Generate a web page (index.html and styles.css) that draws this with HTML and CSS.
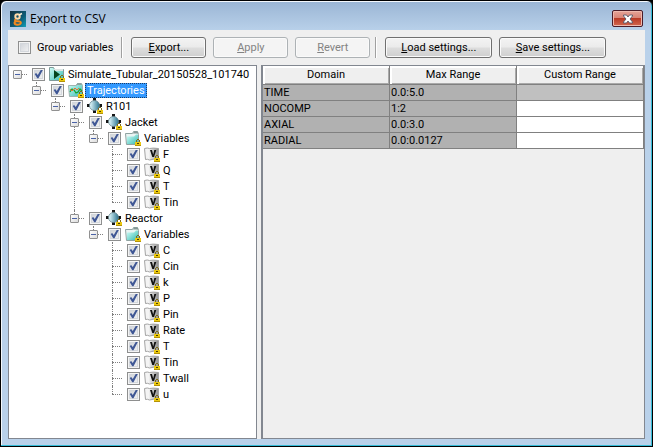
FILE: index.html
```html
<!DOCTYPE html>
<html lang="en">
<head>
<meta charset="utf-8">
<title>Export to CSV</title>
<link rel="stylesheet" href="styles.css">
</head>
<body>
<svg class="defs" aria-hidden="true">
  <defs>
    <linearGradient id="teal" x1="0" y1="0" x2="1" y2="1"><stop offset="0" stop-color="#d4fff9"/><stop offset="1" stop-color="#35b9b0"/></linearGradient>
    <linearGradient id="ball" x1="0" x2="1"><stop offset="0.1" stop-color="#d8f2f7"/><stop offset="1" stop-color="#2c7590"/></linearGradient>
    <linearGradient id="page" x1="0" x2="1"><stop offset="0.3" stop-color="#f4f4f4"/><stop offset="1" stop-color="#8e8e8e"/></linearGradient>
    <symbol id="lock" viewBox="0 0 6 7"><g shape-rendering="crispEdges"><path d="M1 1h1V0h2v1h1v2H4V1H2v2H1z" fill="#7d6c1c"/><path d="M0 3h6v4H0z" fill="#ecc90f"/><path d="M0 6h6v1H0z" fill="#b39208"/><path d="M2 4h2v1H2z" fill="#4a3d00"/></g></symbol>
    <symbol id="run" viewBox="0 0 17 16"><path d="M1.500 14.500V1.500h4l1 2h9v11z" fill="url(#teal)" stroke="#7f9a99"/><path d="M6 3h9v2H6z" fill="#dfe5e5"/><path d="M6 4l6 4.500L6 13z" fill="#05451f"/><use href="#lock" x="11" y="9" width="6" height="7"/></symbol>
    <symbol id="traj" viewBox="0 0 17 16"><path d="M1.500 3.500h8l1-2h4l1 2v11h-13z" fill="url(#teal)" stroke="#9fb3b0"/><path d="M9 3l1.500-2H14l1 2z" fill="#8da3a1"/><path d="M3 10l2-3 2 1 2 3 2-1 2-3 2 2" fill="none" stroke="#16a32d" stroke-width="1.200"/><path d="M3 7l2 2 3-3 2 2 2-2" fill="none" stroke="#e8742c"/><use href="#lock" x="11" y="9" width="6" height="7"/></symbol>
    <symbol id="unit" viewBox="0 0 17 16"><path d="M7 0h3v3H7zM1 6h3v3H1zM13 6h3v3h-3zM7 12h3v3H7z" fill="#161616"/><circle cx="8.500" cy="7.500" r="5" fill="url(#ball)" stroke="#6d8992" stroke-width=".8"/><use href="#lock" x="11" y="9" width="6" height="7"/></symbol>
    <symbol id="folder" viewBox="0 0 17 16"><path d="M2.500 14.500L1.500 3.500h7l1-2h4l1 3v10z" fill="#eaf4f3" stroke="#8fa3a1"/><path d="M9 3.500l1-2h3.500l1 2z" fill="#829795"/><path d="M3 14V6.500h7L12 4.500h2V14z" fill="url(#teal)"/><use href="#lock" x="11" y="9" width="6" height="7"/></symbol>
    <symbol id="var" viewBox="0 0 17 16"><path d="M1.500 2.500q3-1 5 0 3-.8 9 0v11q-6-.7-9 .5-2-1.200-4-.5z" fill="url(#page)" stroke="#a4a4a4"/><path d="M7 4l2.300 7H11l2.300-7h-2L10.200 8.500 9 4z" fill="#111"/><use href="#lock" x="11" y="9" width="6" height="7"/></symbol>
  </defs>
</svg>
<div class="window">
  <header class="titlebar">
    <svg class="logo" viewBox="0 0 16 16" aria-hidden="true">
      <defs><linearGradient id="lg" x1="0" y1="0" x2="1" y2="1"><stop offset="0" stop-color="#14303e"/><stop offset=".6" stop-color="#0d5c78"/><stop offset="1" stop-color="#14a0b8"/></linearGradient></defs>
      <path d="M0 0h16v16H0z" fill="url(#lg)"/>
      <circle cx="7.500" cy="5.500" r="2.200" fill="none" stroke="#ffd9a8" stroke-width="2"/>
      <path d="M9 4l3-1.500" stroke="#fff0d8" stroke-width="1.500"/>
      <path d="M6 8.300q-2 1 0 1.800l3.500.3q2.500 1 .5 2.700-3 1.300-5 0-1.500-1.800 1.300-2.800" fill="none" stroke="#f58a1e" stroke-width="2"/>
    </svg>
    <h1>Export to CSV</h1>
    <button class="close" type="button" aria-label="Close">
      <svg viewBox="0 0 12 10" aria-hidden="true"><path d="M1.500 1h3L6 3l1.500-2h3v1L8 5l2.500 3v1h-3L6 7 4.500 9h-3V8L4 5 1.500 2z" fill="#fff" stroke="#55586b" stroke-width=".9"/></svg>
    </button>
  </header>
  <main class="client">
    <div class="toolbar">
      <label class="group"><input type="checkbox" class="check">Group variables</label>
      <span class="sep"></span>
      <button class="btn" type="button"><u>E</u>xport...</button>
      <button class="btn" type="button" disabled><u>A</u>pply</button>
      <button class="btn" type="button" disabled><u>R</u>evert</button>
      <span class="sep"></span>
      <button class="btn wide" type="button"><u>L</u>oad settings...</button>
      <button class="btn wide" type="button"><u>S</u>ave settings...</button>
    </div>
    <div class="panes">
      <nav class="tree-pane">
        <ul class="tree">
          <li><div class="row"><button class="toggle" type="button" aria-label="Collapse"></button><label><input type="checkbox" class="check" checked><svg class="icon"><use href="#run"/></svg><span>Simulate_Tubular_20150528_101740</span></label></div>
            <ul>
              <li><div class="row"><button class="toggle" type="button" aria-label="Collapse"></button><label><input type="checkbox" class="check" checked><svg class="icon"><use href="#traj"/></svg><span class="selected">Trajectories</span></label></div>
                <ul>
                  <li><div class="row"><button class="toggle" type="button" aria-label="Collapse"></button><label><input type="checkbox" class="check" checked><svg class="icon"><use href="#unit"/></svg><span>R101</span></label></div>
                    <ul>
                      <li><div class="row"><button class="toggle" type="button" aria-label="Collapse"></button><label><input type="checkbox" class="check" checked><svg class="icon"><use href="#unit"/></svg><span>Jacket</span></label></div>
                        <ul>
                          <li><div class="row"><button class="toggle" type="button" aria-label="Collapse"></button><label><input type="checkbox" class="check" checked><svg class="icon"><use href="#folder"/></svg><span>Variables</span></label></div>
                            <ul>
                              <li><div class="row"><label><input type="checkbox" class="check" checked><svg class="icon"><use href="#var"/></svg><span>F</span></label></div></li>
                              <li><div class="row"><label><input type="checkbox" class="check" checked><svg class="icon"><use href="#var"/></svg><span>Q</span></label></div></li>
                              <li><div class="row"><label><input type="checkbox" class="check" checked><svg class="icon"><use href="#var"/></svg><span>T</span></label></div></li>
                              <li><div class="row"><label><input type="checkbox" class="check" checked><svg class="icon"><use href="#var"/></svg><span>Tin</span></label></div></li>
                            </ul>
                          </li>
                        </ul>
                      </li>
                      <li><div class="row"><button class="toggle" type="button" aria-label="Collapse"></button><label><input type="checkbox" class="check" checked><svg class="icon"><use href="#unit"/></svg><span>Reactor</span></label></div>
                        <ul>
                          <li><div class="row"><button class="toggle" type="button" aria-label="Collapse"></button><label><input type="checkbox" class="check" checked><svg class="icon"><use href="#folder"/></svg><span>Variables</span></label></div>
                            <ul>
                              <li><div class="row"><label><input type="checkbox" class="check" checked><svg class="icon"><use href="#var"/></svg><span>C</span></label></div></li>
                              <li><div class="row"><label><input type="checkbox" class="check" checked><svg class="icon"><use href="#var"/></svg><span>Cin</span></label></div></li>
                              <li><div class="row"><label><input type="checkbox" class="check" checked><svg class="icon"><use href="#var"/></svg><span>k</span></label></div></li>
                              <li><div class="row"><label><input type="checkbox" class="check" checked><svg class="icon"><use href="#var"/></svg><span>P</span></label></div></li>
                              <li><div class="row"><label><input type="checkbox" class="check" checked><svg class="icon"><use href="#var"/></svg><span>Pin</span></label></div></li>
                              <li><div class="row"><label><input type="checkbox" class="check" checked><svg class="icon"><use href="#var"/></svg><span>Rate</span></label></div></li>
                              <li><div class="row"><label><input type="checkbox" class="check" checked><svg class="icon"><use href="#var"/></svg><span>T</span></label></div></li>
                              <li><div class="row"><label><input type="checkbox" class="check" checked><svg class="icon"><use href="#var"/></svg><span>Tin</span></label></div></li>
                              <li><div class="row"><label><input type="checkbox" class="check" checked><svg class="icon"><use href="#var"/></svg><span>Twall</span></label></div></li>
                              <li><div class="row"><label><input type="checkbox" class="check" checked><svg class="icon"><use href="#var"/></svg><span>u</span></label></div></li>
                            </ul>
                          </li>
                        </ul>
                      </li>
                    </ul>
                  </li>
                </ul>
              </li>
            </ul>
          </li>
        </ul>
      </nav>
      <section class="table-pane">
        <table>
          <thead><tr><th>Domain</th><th>Max Range</th><th>Custom Range</th></tr></thead>
          <tbody>
            <tr><td>TIME</td><td>0.0:5.0</td><td class="fixed"></td></tr>
            <tr><td>NOCOMP</td><td>1:2</td><td class="editable"></td></tr>
            <tr><td>AXIAL</td><td>0.0:3.0</td><td class="editable"></td></tr>
            <tr><td>RADIAL</td><td>0.0:0.0127</td><td class="editable"></td></tr>
          </tbody>
        </table>
      </section>
    </div>
  </main>
</div>
</body>
</html>
```
FILE: styles.css
```css
* { box-sizing: border-box; }

body {
  margin: 0;
  background: #000;
  color: #000;
  font: 11px/16px Roboto, Tahoma, sans-serif;
}

ul { list-style: none; margin: 0; padding: 0; }
button { font: inherit; color: inherit; padding: 0; }
.defs { position: absolute; width: 0; height: 0; }

.window {
  display: flex;
  flex-direction: column;
  height: 100vh;
  padding: 0 7px 7px;
  border: 1px solid #000;
  border-radius: 6px 6px 0 0;
  background: linear-gradient(#9ab5d4, #b9d1ea 30px);
  box-shadow: inset -1px -1px #35bcd8, inset 1px 1px #f4f8fc;
}

.titlebar {
  display: flex;
  align-items: center;
  flex: 0 0 29px;
  padding: 6px 2px 0;
}
.logo { width: 16px; height: 16px; margin-right: 4px; }
.titlebar h1 {
  flex: 1;
  margin: 0;
  font: 12px/16px "Open Sans", "Noto Sans", sans-serif;
}
.close {
  display: flex;
  align-items: center;
  justify-content: center;
  width: 31px;
  height: 17px;
  border: 1px solid #4a1c28;
  border-radius: 2px;
  background: linear-gradient(#e5a398, #d98577 45%, #b93a26 50%, #d2674f);
  box-shadow: inset 0 0 0 1px #eeb9ae;
}
.close svg { width: 12px; height: 10px; }

.client {
  display: flex;
  flex-direction: column;
  flex: 1;
  min-height: 0;
  background: #efefef;
}

.toolbar {
  display: flex;
  align-items: center;
  gap: 7px;
  padding: 7px 10px;
}
.group { display: flex; align-items: center; gap: 6px; margin-right: 3px; white-space: nowrap; }
.sep { width: 2px; height: 21px; margin: 0 1px 0 -2px; border-left: 1px solid #a0a0a0; border-right: 1px solid #fff; }
.btn {
  min-width: 75px;
  height: 21px;
  border: 1px solid #707070;
  border-radius: 3px;
  background: linear-gradient(#f3f3f3, #ebebeb 48%, #dddddd 52%, #cfcfcf);
  box-shadow: inset 0 0 0 1px #fafafa;
}
.btn.wide { min-width: 107px; }
.btn:disabled { color: #838383; border-color: #adb2b5; background: #f4f4f4; }

.check {
  appearance: none;
  flex: none;
  display: grid;
  place-items: center;
  width: 13px;
  height: 13px;
  margin: 0;
  border: 1px solid #8e8f8f;
  background: linear-gradient(135deg, #cbcfd5, #f6f6f6);
  box-shadow: inset 0 0 0 1px #f4f4f4, inset 0 0 0 2px #d3d7dc;
}
.check:checked::after {
  content: "";
  width: 9px;
  height: 9px;
  background: #3f5795;
  clip-path: polygon(8% 50%, 24% 40%, 42% 62%, 76% 2%, 98% 6%, 50% 96%, 36% 96%);
}

.panes { display: flex; flex: 1; gap: 4px; min-height: 0; }
.tree-pane {
  flex: 249;
  min-width: 0;
  overflow: hidden;
  border: 1px solid #828790;
  background: #fff;
}
.table-pane {
  flex: 384;
  min-width: 0;
  border: 1px solid #828790;
  border-left-width: 2px;
}

.tree { padding: 0 4px; }
.tree ul { padding-left: 19px; }
.tree li { position: relative; }
.tree li li::before {
  content: "";
  position: absolute;
  left: 4px;
  top: 0;
  bottom: 0;
  border-left: 1px dotted #808080;
}
.tree li li:last-child::before { bottom: auto; height: 8px; }
.row { position: relative; display: flex; align-items: center; height: 16px; padding-left: 19px; }
.row::before {
  content: "";
  position: absolute;
  left: 4px;
  top: 8px;
  width: 10px;
  border-top: 1px dotted #808080;
}
.row label { display: flex; align-items: center; white-space: nowrap; }
.row .icon { flex: none; width: 17px; height: 16px; margin: 0 1px 0 3px; }
.row span { padding: 0 2px; line-height: 15px; }
.row .selected { color: #fff; background: #3399ff; outline: 1px dotted #1c3d66; outline-offset: -1px; }
.toggle {
  position: absolute;
  left: 0;
  top: 4px;
  width: 9px;
  height: 9px;
  border: 1px solid #919191;
  border-radius: 1px;
  background: linear-gradient(#4b63a7, #4b63a7) center / 5px 1px no-repeat, linear-gradient(135deg, #fff, #dcdcdc);
}

table { width: 100%; table-layout: fixed; border-collapse: separate; border-spacing: 0; }
th {
  height: 19px;
  padding: 0;
  font-weight: normal;
  line-height: 18px;
  border: 1px solid #808080;
  border-width: 0 1px 1px 0;
  box-shadow: inset 2px 2px #fff, inset -1px -1px #a9a9a9;
}
td {
  height: 16px;
  padding: 0 1px;
  line-height: 15px;
  border: 1px solid #808080;
  border-width: 0 1px 1px 0;
  background: #b1b1b1;
}
td.fixed { background: #c0c0c0; }
td.editable { background: #fff; }
```
